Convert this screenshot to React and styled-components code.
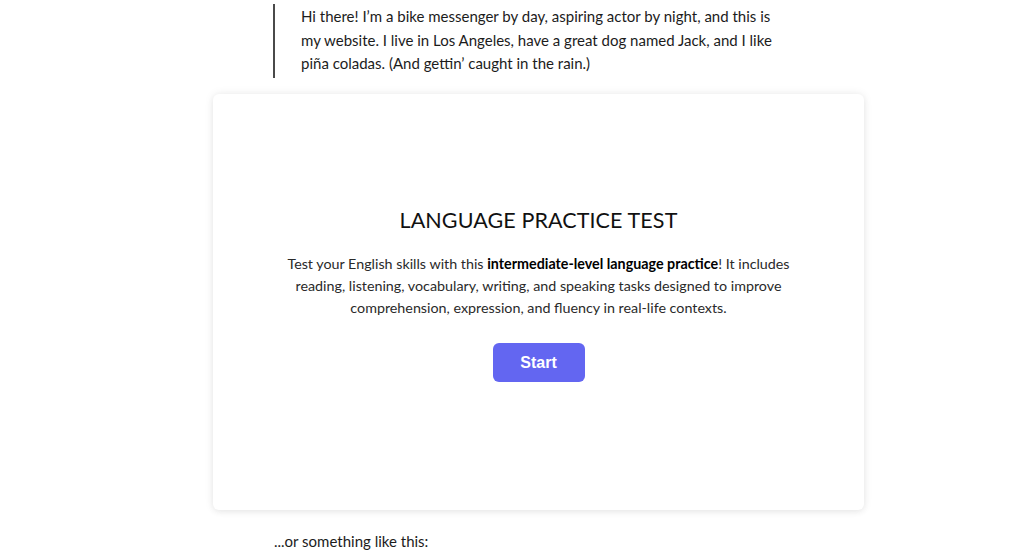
import React from "react";
import styled, { createGlobalStyle } from "styled-components";

const Global = createGlobalStyle`
  html, body { margin: 0; padding: 0; background: #ffffff; }
  body { font-family: Lato, "Noto Sans", sans-serif; color: #1f1f1f; }
`;

const Page = styled.div`
  width: 651px;
  margin-left: 213px;
  display: flex;
  flex-direction: column;
`;

const Quote = styled.blockquote`
  margin: 4px 0 0 60px;
  padding: 1px 0 2px 26px;
  border-left: 2px solid #4a4a4a;
  width: 480px;
  font-size: 15px;
  line-height: 23.5px;
  color: #1c1c1c;
`;

const Card = styled.section`
  margin-top: 16px;
  height: 416px;
  background: #fff;
  border-radius: 6px;
  box-shadow: 0 0 10px rgba(0, 0, 0, 0.08), 0 2px 6px rgba(0, 0, 0, 0.05);
  display: flex;
  flex-direction: column;
  align-items: center;
  justify-content: center;
  box-sizing: border-box;
  padding-bottom: 14px;
`;

const Title = styled.h2`
  margin: 0;
  font-weight: 400;
  font-size: 21.5px;
  letter-spacing: 0.1px;
  color: #111;
`;

const Lead = styled.p`
  margin: 20px 0 0;
  width: 530px;
  text-align: center;
  font-size: 14.3px;
  line-height: 22px;
  color: #2a2a2a;
  b { font-weight: 700; color: #000; }
`;

const StartButton = styled.button`
  margin-top: 24px;
  width: 92px;
  height: 39px;
  border: none;
  border-radius: 6px;
  background: #6366f1;
  color: #fff;
  font-family: "Liberation Sans", Arial, sans-serif;
  font-weight: 700;
  font-size: 16px;
  cursor: pointer;
`;

const After = styled.p`
  margin: 20px 0 0 61px;
  font-size: 15px;
  line-height: 23px;
  color: #1c1c1c;
`;

export default function App() {
  return (
    <>
      <Global />
      <Page>
        <Quote>
          Hi there! I’m a bike messenger by day, aspiring actor by night, and this is my
          website. I live in Los Angeles, have a great dog named Jack, and I like piña
          coladas. (And gettin’ caught in the rain.)
        </Quote>
        <Card>
          <Title>LANGUAGE PRACTICE TEST</Title>
          <Lead>
            Test your English skills with this <b>intermediate-level language practice</b>! It
            includes reading, listening, vocabulary, writing, and speaking tasks designed to
            improve comprehension, expression, and fluency in real-life contexts.
          </Lead>
          <StartButton>Start</StartButton>
        </Card>
        <After>...or something like this:</After>
      </Page>
    </>
  );
}
